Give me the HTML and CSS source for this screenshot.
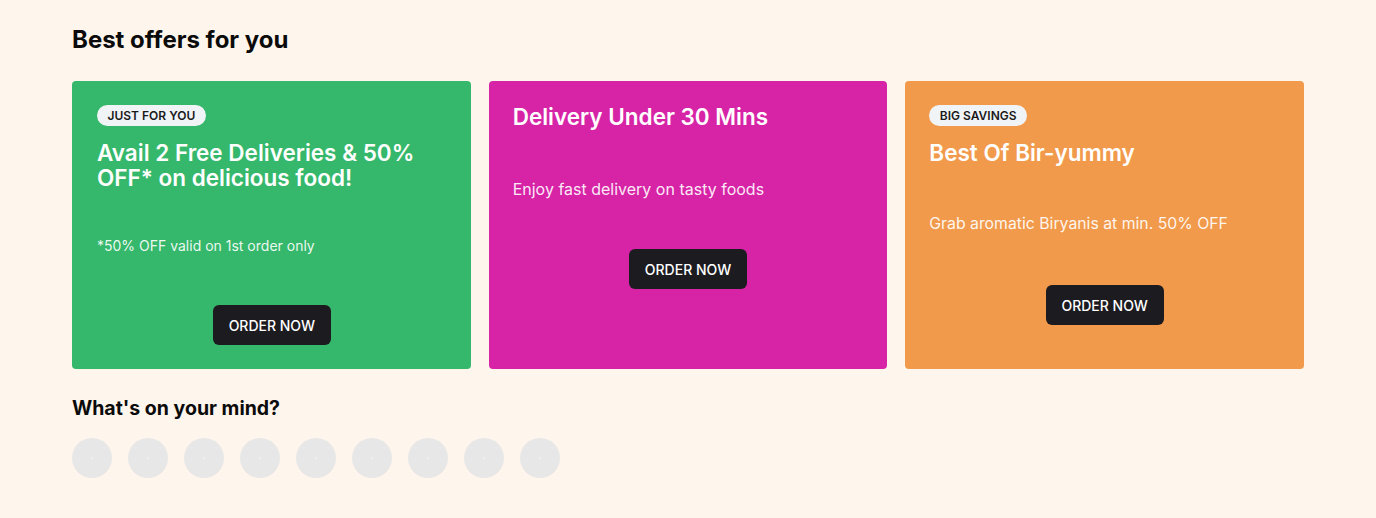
FILE: index.html
```html
<!DOCTYPE html>
<html lang="en">
<head>
<meta charset="utf-8">
<title>Offers</title>
<link rel="stylesheet" href="styles.css">
</head>
<body>
<main class="page">
  <h2 class="section-title">Best offers for you</h2>
  <div class="offers">
    <div class="offer offer-green">
      <span class="badge">JUST FOR YOU</span>
      <h3 class="offer-title">Avail 2 Free Deliveries &amp; 50% OFF* on delicious food!</h3>
      <p class="offer-desc offer-desc-small">*50% OFF valid on 1st order only</p>
      <button class="order-btn">ORDER NOW</button>
    </div>
    <div class="offer offer-pink">
      <h3 class="offer-title">Delivery Under 30 Mins</h3>
      <p class="offer-desc">Enjoy fast delivery on tasty foods</p>
      <button class="order-btn">ORDER NOW</button>
    </div>
    <div class="offer offer-orange">
      <span class="badge">BIG SAVINGS</span>
      <h3 class="offer-title">Best Of Bir-yummy</h3>
      <p class="offer-desc">Grab aromatic Biryanis at min. 50% OFF</p>
      <button class="order-btn">ORDER NOW</button>
    </div>
  </div>
  <h2 class="section-title mind-title">What's on your mind?</h2>
  <div class="mind-row">
    <span class="mind-item"></span>
    <span class="mind-item"></span>
    <span class="mind-item"></span>
    <span class="mind-item"></span>
    <span class="mind-item"></span>
    <span class="mind-item"></span>
    <span class="mind-item"></span>
    <span class="mind-item"></span>
    <span class="mind-item"></span>
  </div>
</main>
</body>
</html>
```
FILE: styles.css
```css
* { box-sizing: border-box; }
html, body {
  margin: 0;
  padding: 0;
  background: #fef5ec;
  font-family: Inter, "Liberation Sans", sans-serif;
  color: #111;
}
.page {
  width: 1232px;
  margin: 0 auto;
  padding-top: 24px;
}
.section-title {
  margin: 0;
  font-size: 24px;
  line-height: 32px;
  font-weight: 700;
  color: #0b0b0b;
}
.offers {
  margin-top: 25px;
  display: grid;
  grid-template-columns: repeat(3, 1fr);
  gap: 18px;
}
.offer {
  border-radius: 4px;
  padding: 24px;
  display: flex;
  flex-direction: column;
  align-items: flex-start;
  color: #fff;
}
.offer-green { background: #35b86b; padding-left: 25px; }
.offer-pink { background: #d724a7; }
.offer-orange { background: #f29a4b; }
.badge {
  display: inline-block;
  background: #f1f4f7;
  color: #1a1a1a;
  font-size: 12px;
  font-weight: 600;
  line-height: 15px;
  padding: 3px 10.5px;
  border-radius: 12px;
  margin-bottom: 14px;
}
.offer-title {
  margin: 0;
  font-size: 22.5px;
  line-height: 25px;
  font-weight: 600;
  color: #fff;
}
.offer-pink .offer-title { margin-top: -1px; margin-bottom: 1px; }
.offer-desc {
  margin: 47px 0 0;
  font-size: 16px;
  line-height: 24px;
  color: rgba(255,255,255,0.92);
}
.offer-orange .offer-desc { font-size: 15.8px; }
.offer-desc-small {
  margin-top: 46px;
  font-size: 14px;
  line-height: 20px;
}
.order-btn {
  align-self: center;
  margin-top: 48px;
  width: 118px;
  height: 40px;
  border: 0;
  border-radius: 6px;
  background: #1c1b1f;
  color: #fff;
  font-family: Inter, "Liberation Sans", sans-serif;
  font-size: 14px;
  font-weight: 500;
}
.offer-desc-small + .order-btn { margin-top: 49px; }
.offer-orange .order-btn { margin-top: 49px; }
.mind-title {
  margin-top: 24px;
  font-size: 19.5px;
  line-height: 30px;
  font-weight: 700;
}
.mind-row {
  margin-top: 15px;
  display: flex;
  gap: 16px;
}
.mind-item {
  width: 40px;
  height: 40px;
  border-radius: 50%;
  background: #e8e7e7;
  display: flex;
  align-items: center;
  justify-content: center;
}
.mind-item::after {
  content: "";
  width: 2px;
  height: 2px;
  background: #efefef;
}
```
